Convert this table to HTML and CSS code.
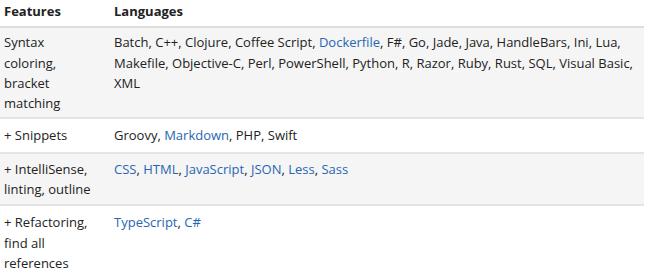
FILE: index.html
```html
<!DOCTYPE html>
<html lang="en">
<head>
<meta charset="utf-8">
<title>Languages</title>
<link rel="stylesheet" href="styles.css">
</head>
<body>
<table class="lang-table">
  <thead>
    <tr>
      <th class="col-feature">Features</th>
      <th>Languages</th>
    </tr>
  </thead>
  <tbody>
    <tr class="shaded syntax">
      <td class="feature">Syntax coloring, bracket matching</td>
      <td>Batch, C++, Clojure, Coffee Script, <a href="#">Dockerfile</a>, F#, Go, Jade, Java, HandleBars, Ini, Lua, Makefile, Objective-C, Perl, PowerShell, Python, R, Razor, Ruby, Rust, SQL, Visual Basic, XML</td>
    </tr>
    <tr class="snippets">
      <td class="feature">+ Snippets</td>
      <td>Groovy, <a href="#">Markdown</a>, PHP, Swift</td>
    </tr>
    <tr class="shaded">
      <td class="feature">+ IntelliSense, linting, outline</td>
      <td><a href="#">CSS</a>, <a href="#">HTML</a>, <a href="#">JavaScript</a>, <a href="#">JSON</a>, <a href="#">Less</a>, <a href="#">Sass</a></td>
    </tr>
    <tr class="last">
      <td class="feature">+ Refactoring, find all references</td>
      <td><a href="#">TypeScript</a>, <a href="#">C#</a></td>
    </tr>
  </tbody>
</table>
</body>
</html>
```

FILE: styles.css
```css
html, body {
  margin: 0;
  padding: 0;
  background: #ffffff;
}

body {
  font-family: "Open Sans", "Noto Sans", "Liberation Sans", sans-serif;
  font-size: 13px;
  line-height: 20.3px;
  color: #222222;
}

.lang-table {
  width: 644px;
  border-collapse: collapse;
  border-spacing: 0;
  table-layout: fixed;
}

.lang-table th,
.lang-table td {
  text-align: left;
  vertical-align: top;
  padding: 5px 4px;
}

.lang-table th {
  font-weight: 700;
  padding-top: 1px;
  padding-bottom: 5px;
  border-bottom: 2px solid #dddddd;
}

.lang-table .col-feature {
  width: 92px;
  padding-right: 14px;
}

.lang-table td.feature {
  padding-right: 14px;
}

.lang-table td {
  border-bottom: 2px solid #e4e4e4;
}

.lang-table tr.shaded td {
  background: #f5f5f5;
}

.lang-table tr.syntax td {
  padding-top: 4px;
  padding-bottom: 4px;
}

.lang-table tr.snippets td {
  padding-top: 6px;
  padding-bottom: 6px;
}

.lang-table tr.last td {
  padding-top: 6px;
  border-bottom: none;
}

.lang-table a {
  color: #2766b3;
  text-decoration: none;
}
```
